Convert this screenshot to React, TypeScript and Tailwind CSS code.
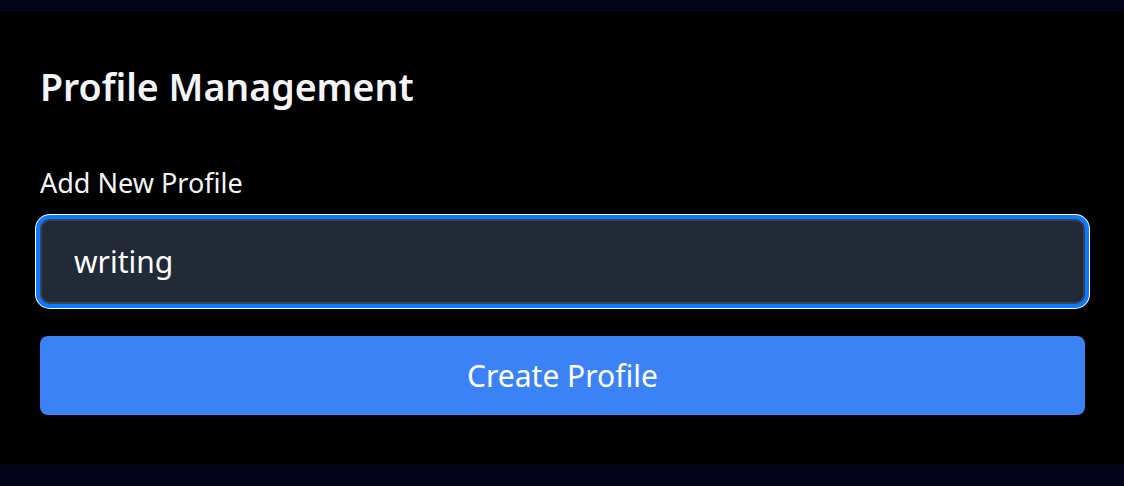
export default function App() {
  return (
    <main
      className="min-h-[486px] bg-[#03031a] pt-3 pb-[23px]"
      style={{ fontFamily: '"Noto Sans", "Open Sans", sans-serif' }}
    >
      <section className="bg-black pl-10 pr-[39px] pt-[53px] pb-[49px] flex flex-col">
        <h1 className="text-[37.5px] leading-[44px] font-semibold text-[#f3f4f6]">
          Profile Management
        </h1>
        <label
          htmlFor="profile"
          className="mt-[60px] text-[27px] leading-[28px] text-[#f3f4f6]"
        >
          Add New Profile
        </label>
        <input
          id="profile"
          type="text"
          defaultValue="writing"
          className="mt-[22px] h-[85px] w-full rounded-[10px] border-2 border-[#3b4252] bg-[#222a38] px-[32px] text-[30px] text-white outline-none shadow-[0_0_0_4px_#0a7aff,0_0_0_5px_#ffffff]"
        />
        <button
          type="button"
          className="mt-8 h-[79px] w-full rounded-lg bg-[#3b82f6] text-[30px] text-white"
        >
          Create Profile
        </button>
      </section>
    </main>
  );
}
